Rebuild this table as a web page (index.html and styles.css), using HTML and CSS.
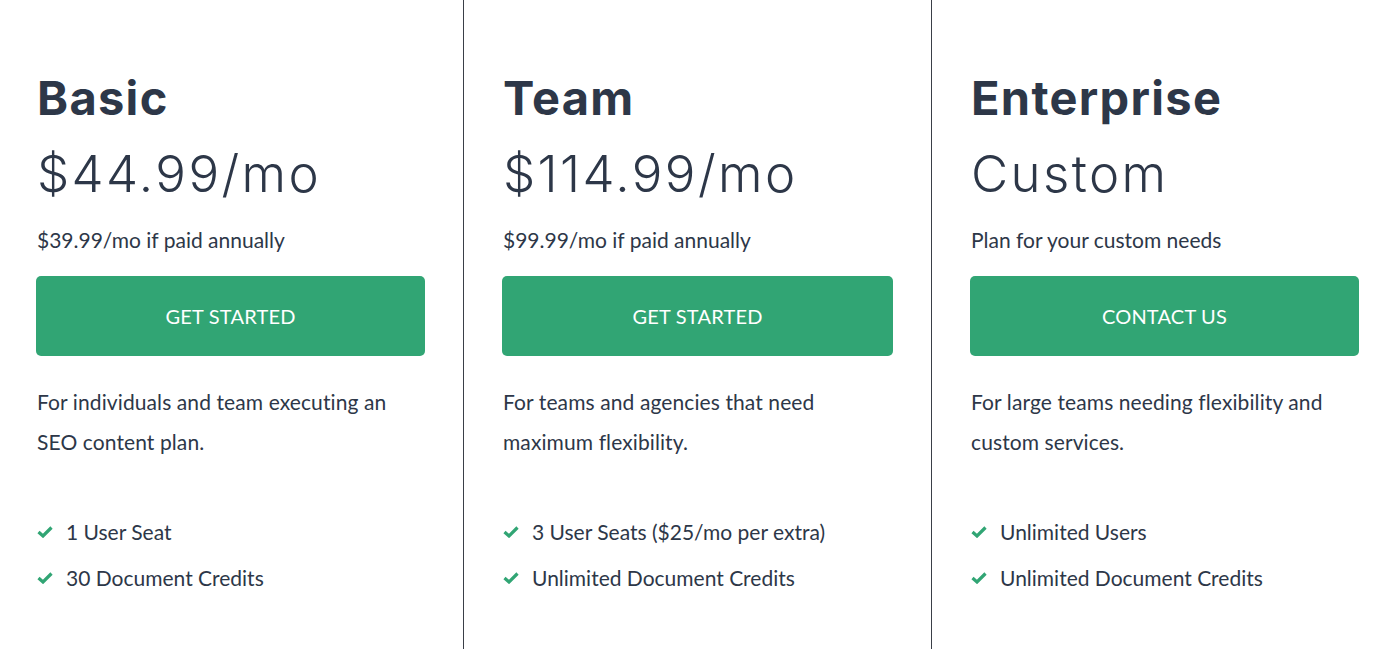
FILE: index.html
```html
<!DOCTYPE html>
<html lang="en">
<head>
<meta charset="utf-8">
<title>Pricing</title>
<link rel="stylesheet" href="styles.css">
</head>
<body>
<div class="plans">
  <section class="plan plan-first">
    <h2 class="plan-name">Basic</h2>
    <div class="plan-price">$44.99/mo</div>
    <p class="plan-note">$39.99/mo if paid annually</p>
    <a class="plan-btn" href="#">GET STARTED</a>
    <p class="plan-desc">For individuals and team executing an SEO content plan.</p>
    <ul class="plan-features">
      <li><svg class="check" viewBox="0 0 16 12"><polyline points="1.5,6 6,10 14.5,1.5"/></svg>1 User Seat</li>
      <li><svg class="check" viewBox="0 0 16 12"><polyline points="1.5,6 6,10 14.5,1.5"/></svg>30 Document Credits</li>
    </ul>
  </section>
  <section class="plan">
    <h2 class="plan-name">Team</h2>
    <div class="plan-price">$114.99/mo</div>
    <p class="plan-note">$99.99/mo if paid annually</p>
    <a class="plan-btn" href="#">GET STARTED</a>
    <p class="plan-desc">For teams and agencies that need maximum flexibility.</p>
    <ul class="plan-features">
      <li><svg class="check" viewBox="0 0 16 12"><polyline points="1.5,6 6,10 14.5,1.5"/></svg>3 User Seats ($25/mo per extra)</li>
      <li><svg class="check" viewBox="0 0 16 12"><polyline points="1.5,6 6,10 14.5,1.5"/></svg>Unlimited Document Credits</li>
    </ul>
  </section>
  <section class="plan plan-last">
    <h2 class="plan-name">Enterprise</h2>
    <div class="plan-price">Custom</div>
    <p class="plan-note">Plan for your custom needs</p>
    <a class="plan-btn" href="#">CONTACT US</a>
    <p class="plan-desc">For large teams needing flexibility and custom services.</p>
    <ul class="plan-features">
      <li><svg class="check" viewBox="0 0 16 12"><polyline points="1.5,6 6,10 14.5,1.5"/></svg>Unlimited Users</li>
      <li><svg class="check" viewBox="0 0 16 12"><polyline points="1.5,6 6,10 14.5,1.5"/></svg>Unlimited Document Credits</li>
    </ul>
  </section>
</div>
</body>
</html>
```
FILE: styles.css
```css
html, body {
  margin: 0;
  padding: 0;
  background: #ffffff;
}
body {
  font-family: "Lato", "Open Sans", sans-serif;
  color: #2d3748;
  overflow: hidden;
}
.plans {
  display: grid;
  grid-template-columns: 463px 468px 1fr;
  height: 649px;
}
.plan {
  border-left: 1px solid #3a3f47;
  padding: 0 38px;
  display: flex;
  flex-direction: column;
}
.plan-first {
  border-left: none;
  padding: 0 38px 0 36px;
}
.plan-last {
  padding: 0 35px 0 38px;
}
.plan-name {
  margin: 72px 0 0 1px;
  font-family: "Inter", sans-serif;
  font-weight: 700;
  font-size: 47px;
  line-height: 52px;
  color: #2d3748;
  letter-spacing: 1.3px;
}
.plan-price {
  margin: 22px 0 0 1px;
  font-family: "Inter", sans-serif;
  font-weight: 300;
  font-size: 51px;
  line-height: 56px;
  color: #2d3748;
  letter-spacing: 2.4px;
}
.plan-note {
  margin: 24px 0 0 1px;
  font-size: 21px;
  line-height: 28px;
}
.plan-btn {
  margin-top: 22px;
  height: 80px;
  border-radius: 5px;
  background: #31a574;
  color: #ffffff;
  text-decoration: none;
  display: flex;
  align-items: center;
  justify-content: center;
  font-size: 20px;
  letter-spacing: 0.2px;
}
.plan-desc {
  margin: 26px 0 0 1px;
  font-size: 21px;
  line-height: 40px;
  letter-spacing: 0.1px;
}
.plan-features {
  list-style: none;
  margin: 56px 0 0 1px;
  padding: 0;
}
.plan-features li {
  display: flex;
  align-items: center;
  font-size: 21px;
  line-height: 28px;
  height: 28px;
  margin-bottom: 18px;
}
.check {
  width: 16px;
  height: 12px;
  margin-right: 13px;
  fill: none;
  stroke: #31a574;
  stroke-width: 3.2;
  stroke-linecap: butt;
  stroke-linejoin: miter;
}
```
